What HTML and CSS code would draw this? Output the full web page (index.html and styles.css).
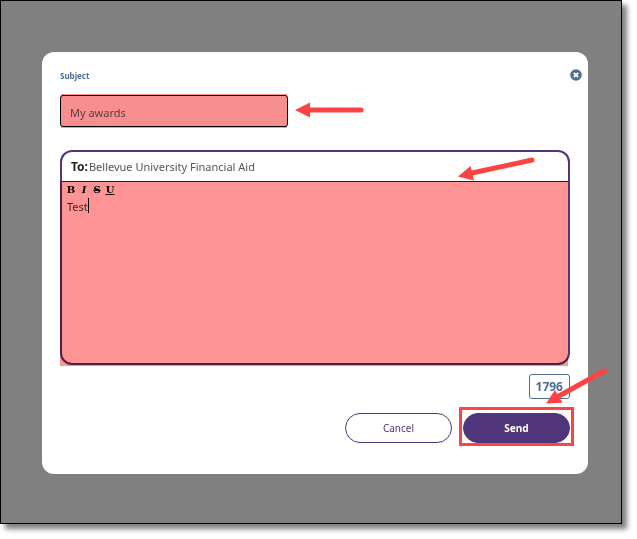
FILE: index.html
```html
<!DOCTYPE html>
<html lang="en">
<head>
  <meta charset="UTF-8">
  <meta name="viewport" content="width=device-width, initial-scale=1.0">
  <title>New Message</title>
  <link rel="stylesheet" href="styles.css">
</head>
<body>

<div class="screen">
  <form class="modal">

    <div class="modal-head">
      <label class="subject-label" for="subject">Subject</label>
      <button type="button" class="close-btn" aria-label="Close">
        <svg viewBox="0 0 12 12" width="12" height="12">
          <circle cx="6" cy="6" r="5.8" fill="#4f6d92"/>
          <path d="M3.8 3.8 L8.2 8.2 M8.2 3.8 L3.8 8.2" stroke="#fff" stroke-width="1.9"/>
        </svg>
      </button>
    </div>

    <div class="subject">
      <input type="text" id="subject" value="My awards">
      <span class="mark mark-subject"></span>
      <svg class="arrow arrow-subject" viewBox="0 0 70 16" width="70" height="16">
        <path d="M12 8 H66" stroke="#ff4343" stroke-width="5" stroke-linecap="round"/>
        <path d="M0 8 L15 0.5 V15.5 Z" fill="#ff4343"/>
      </svg>
    </div>

    <div class="editor">
      <div class="to-row"><b>To:</b><span>Bellevue University Financial Aid</span></div>
      <div class="tools">
        <button type="button" class="bold" aria-label="Bold">B</button>
        <button type="button" class="italic" aria-label="Italic">I</button>
        <button type="button" class="strike" aria-label="Strikethrough">S</button>
        <button type="button" class="underline" aria-label="Underline">U</button>
      </div>
      <div class="message">
        <textarea aria-label="Message">Test</textarea>
        <span class="caret"></span>
      </div>
      <span class="mark mark-message"></span>
      <svg class="arrow arrow-message" viewBox="0 0 80 26" width="80" height="26">
        <path d="M14 17 L74 4" stroke="#ff4343" stroke-width="5" stroke-linecap="round"/>
        <path d="M0 20.5 L12.5 10 L16 24.5 Z" fill="#ff4343"/>
      </svg>
    </div>

    <div class="modal-foot">
      <output class="count">1796</output>
      <div class="actions">
        <button type="button" class="btn cancel">Cancel</button>
        <button type="submit" class="btn send">Send</button>
      </div>
      <span class="send-box"></span>
      <svg class="arrow arrow-send" viewBox="0 0 64 38" width="64" height="38">
        <path d="M12 28.5 L58.5 2.8" stroke="#ff4343" stroke-width="5" stroke-linecap="round"/>
        <path d="M0 35.5 L9 22 L16.5 34.8 Z" fill="#ff4343"/>
      </svg>
    </div>

  </form>
</div>

</body>
</html>
```
FILE: styles.css
```css
* {
  box-sizing: border-box;
}

body {
  margin: 0;
  padding: 0 15px 15px 0;
  background-color: #fff;
  color: #333;
  font-family: "Noto Sans", "Open Sans", sans-serif;
  font-size: 11px;
}

button, input, textarea {
  font-family: inherit;
  font-size: inherit;
}

/* Grey backdrop */
.screen {
  padding: 51px 33px 49px 41px;
  border: 1px solid #000;
  background-color: #808080;
  box-shadow: 5px 5px 5px rgba(0, 0, 0, 0.5);
}

/* Modal */
.modal {
  padding: 16px 18px 31px;
  border-radius: 12px;
  background-color: #fff;
}

.modal-head {
  display: flex;
  justify-content: space-between;
  align-items: center;
  height: 14px;
  margin: 0 -12px 13px 0;
}

.subject-label {
  color: #4f6d92;
  font-size: 8px;
  font-weight: bold;
}

.close-btn {
  display: flex;
  padding: 0;
  border: none;
  background: none;
  cursor: pointer;
}

/* Subject field */
.subject {
  position: relative;
  width: 228px;
  max-width: 45%;
}

.subject input {
  display: block;
  width: 100%;
  height: 32px;
  padding: 2px 9px 0;
  border: 1px solid #000;
  border-radius: 3px;
  background-color: #f7f7f7;
  color: #666;
}

.mark {
  position: absolute;
  background-color: #ff9494;
  mix-blend-mode: multiply;
  pointer-events: none;
}

.mark-subject {
  inset: -1px 1px;
}

/* Message editor */
.editor {
  position: relative;
  margin-top: 23px;
  border: 2px solid #50357a;
  border-radius: 12px;
}

.to-row {
  display: flex;
  align-items: center;
  gap: 1px;
  height: 30px;
  padding: 0 9px;
  border-bottom: 1px solid #222;
  color: #555;
}

.to-row b {
  color: #222;
  font-size: 12px;
}

.tools {
  display: flex;
  gap: 3px;
  height: 16px;
  padding: 0 4px;
}

.tools button {
  width: 10px;
  padding: 0;
  border: none;
  background: none;
  color: #000;
  font-family: "DejaVu Serif", serif;
  font-size: 10px;
  font-weight: bold;
  line-height: 16px;
  cursor: pointer;
}

.tools .italic {
  font-style: italic;
}

.tools .strike {
  text-decoration: line-through;
}

.tools .underline {
  text-decoration: underline;
}

.message {
  position: relative;
}

.message textarea {
  display: block;
  width: 100%;
  height: 165px;
  padding: 0 5px;
  border: none;
  outline: none;
  resize: none;
  background: none;
  color: #444;
  line-height: 17px;
}

.caret {
  position: absolute;
  top: 0;
  left: 26px;
  width: 1px;
  height: 15px;
  background-color: #000;
}

.mark-message {
  inset: 30px 0 -3px -2px;
}

/* Footer */
.modal-foot {
  position: relative;
  display: flex;
  flex-direction: column;
  align-items: flex-end;
  gap: 14px;
  margin-top: 9px;
}

.count {
  padding: 0 6px;
  border: 1px solid #4f6d92;
  border-radius: 3px;
  color: #4f6d92;
  font-size: 12px;
  font-weight: bold;
  line-height: 23px;
}

.actions {
  display: flex;
  gap: 11px;
}

.btn {
  width: 107px;
  height: 30px;
  border: 1px solid #50357a;
  border-radius: 15px;
  font-size: 10px;
  cursor: pointer;
}

.cancel {
  background-color: #fff;
  color: #50357a;
}

.send {
  background-color: #50357a;
  color: #fff;
  font-weight: bold;
}

/* Arrows and highlight box */
.arrow {
  position: absolute;
  pointer-events: none;
}

.arrow-subject {
  top: 7px;
  left: 235px;
}

.arrow-message {
  top: 4px;
  right: 30px;
}

.send-box {
  position: absolute;
  right: -4px;
  bottom: -3px;
  width: 115px;
  height: 39px;
  border: 3px solid #ff4343;
  pointer-events: none;
}

.arrow-send {
  top: -6px;
  right: -40px;
}
```
